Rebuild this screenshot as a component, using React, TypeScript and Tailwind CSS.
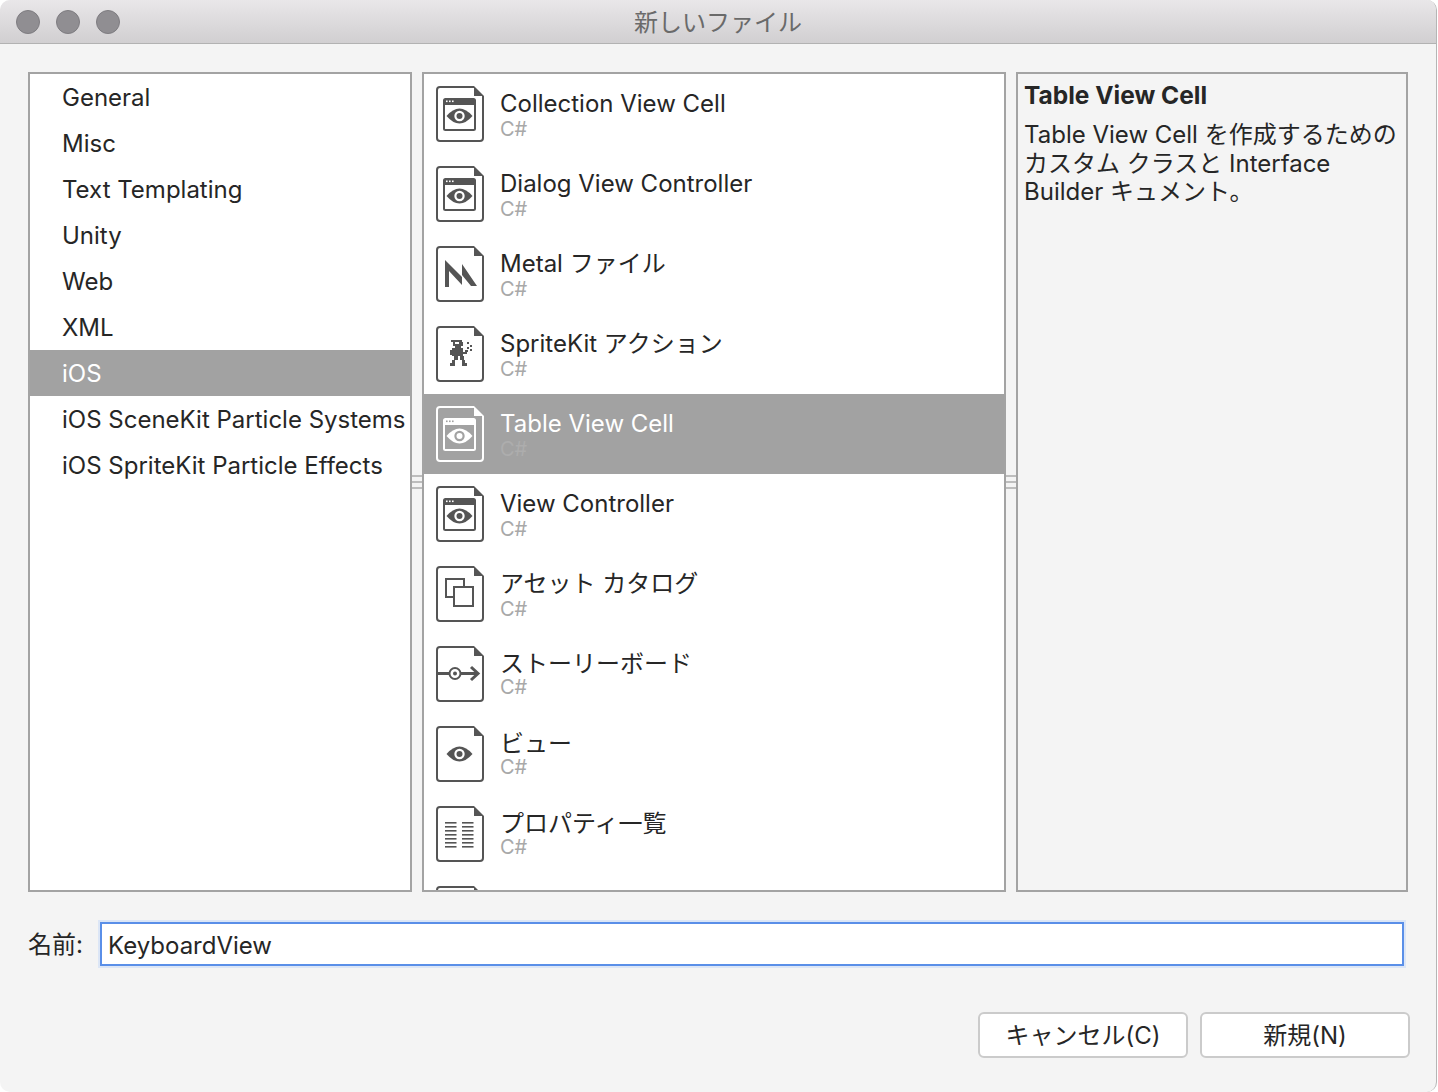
import React from "react";

const font = "font-['Inter','Noto_Sans_CJK_JP',sans-serif]";

const categories = [
  "General",
  "Misc",
  "Text Templating",
  "Unity",
  "Web",
  "XML",
  "iOS",
  "iOS SceneKit Particle Systems",
  "iOS SpriteKit Particle Effects",
];

type Glyph = "window" | "metal" | "sprite" | "assets" | "story" | "eye" | "list" | "none";

const templates: { title: string; glyph: Glyph; tight?: boolean }[] = [
  { title: "Collection View Cell", glyph: "window" },
  { title: "Dialog View Controller", glyph: "window" },
  { title: "Metal ファイル", glyph: "metal" },
  { title: "SpriteKit アクション", glyph: "sprite" },
  { title: "Table View Cell", glyph: "window" },
  { title: "View Controller", glyph: "window" },
  { title: "アセット カタログ", glyph: "assets" },
  { title: "ストーリーボード", glyph: "story", tight: true },
  { title: "ビュー", glyph: "eye", tight: true },
  { title: "プロパティ一覧", glyph: "list", tight: true },
  { title: "", glyph: "none" },
];

const Eye = ({ fg, bg, cy }: { fg: string; bg: string; cy: number }) => (
  <g>
    <path d={`M10.5 ${cy} Q23.5 ${cy - 15} 36.5 ${cy} Q23.5 ${cy + 15} 10.5 ${cy} Z`} fill={fg} />
    <circle cx="23.5" cy={cy} r="5.2" fill={bg} />
    <circle cx="23.5" cy={cy} r="3" fill={fg} />
  </g>
);

const spritePixels = [
  [15, 14, 11, 2], [17, 16, 2, 2], [23, 16, 4, 2], [17, 18, 10, 2], [19, 20, 6, 2],
  [16, 22, 11, 8], [14, 24, 2, 5], [27, 26, 4, 2], [29, 24, 3, 2],
  [18, 30, 4, 4], [24, 30, 4, 4], [16, 34, 3, 3], [26, 34, 3, 3],
  [14, 37, 5, 3], [26, 37, 5, 3], [31, 16, 2, 2], [34, 19, 2, 2],
  [31, 21, 2, 2], [34, 23, 2, 2],
];

const FileIcon = ({ glyph, selected }: { glyph: Glyph; selected: boolean }) => {
  const fg = selected ? "#ffffff" : "#555555";
  const bg = selected ? "#a2a2a2" : "#ffffff";
  return (
    <svg width="48" height="56" viewBox="0 0 48 56" className="shrink-0">
      <path d="M38 1 H4 a3 3 0 0 0 -3 3 V52 a3 3 0 0 0 3 3 H44 a3 3 0 0 0 3 -3 V10" fill="none" stroke={fg} strokeWidth="2" />
      <path d="M38 0 L48 10 H38 Z" fill={fg} />
      {glyph === "window" && (
        <g>
          <rect x="8" y="13" width="31" height="31" rx="1.5" fill="none" stroke={fg} strokeWidth="2" />
          <rect x="8" y="13" width="31" height="6" fill={fg} />
          <rect x="10" y="14.5" width="1.6" height="1.6" fill={bg} />
          <rect x="13" y="14.5" width="1.6" height="1.6" fill={bg} />
          <rect x="16" y="14.5" width="1.6" height="1.6" fill={bg} />
          <Eye fg={fg} bg={bg} cy={30} />
        </g>
      )}
      {glyph === "metal" && <path d="M9 14 L26 31 V18 L41 40 H35 L26 29 V39 L13 25 V41 H9 Z" fill={fg} />}
      {glyph === "sprite" && (
        <g fill={fg}>
          {spritePixels.map(([x, y, w, h], i) => (
            <rect key={i} x={x} y={y} width={w} height={h} />
          ))}
        </g>
      )}
      {glyph === "assets" && (
        <g fill="none" stroke={fg} strokeWidth="2">
          <rect x="10" y="13" width="18" height="18" />
          <rect x="18" y="21" width="19" height="19" fill={bg} />
        </g>
      )}
      {glyph === "story" && (
        <g fill="none" stroke={fg}>
          <path d="M1 27.5 H13 M25 27.5 H41" strokeWidth="3" />
          <path d="M35 21 L42 27.5 L35 34" strokeWidth="3" />
          <circle cx="19" cy="27.5" r="5.5" strokeWidth="2" />
          <circle cx="19" cy="27.5" r="2" fill={fg} stroke="none" />
        </g>
      )}
      {glyph === "eye" && <Eye fg={fg} bg={bg} cy={28} />}
      {glyph === "list" && (
        <g fill={fg}>
          {[16, 20, 24, 28, 32, 36, 40].map((y) => (
            <g key={y}>
              <rect x="9" y={y} width="11.5" height="1.6" />
              <rect x="26" y={y} width="11.5" height="1.6" />
            </g>
          ))}
        </g>
      )}
    </svg>
  );
};

const SplitGrip = () => (
  <div className="flex w-[10px] shrink-0 flex-col items-stretch justify-center gap-[4px]">
    <div className="h-[2px] bg-[#bdbdbd]" />
    <div className="h-[2px] bg-[#bdbdbd]" />
    <div className="h-[2px] bg-[#bdbdbd]" />
  </div>
);

export default function App() {
  return (
    <div className={`h-[1092px] w-[1438px] overflow-hidden bg-white text-[24px] text-[#262626] ${font}`}>
      <div className="flex h-full w-[1437px] flex-col overflow-hidden rounded-[10px] border-r border-[#b5b5b5] bg-[#f4f4f4]">
        {/* title bar */}
        <div className="relative flex h-[44px] shrink-0 items-center gap-[16px] border-b border-[#b2b2b2] bg-gradient-to-b from-[#e9e7e9] to-[#d1cfd1] pl-[16px]">
          <div className="h-[24px] w-[24px] rounded-full border border-[#7e7c80] bg-[#908e92]" />
          <div className="h-[24px] w-[24px] rounded-full border border-[#7e7c80] bg-[#908e92]" />
          <div className="h-[24px] w-[24px] rounded-full border border-[#7e7c80] bg-[#908e92]" />
          <div className="absolute inset-x-0 top-0 text-center text-[24px] leading-[46px] text-[#6a6a6a]">新しいファイル</div>
        </div>

        {/* panels */}
        <div className="ml-[28px] mt-[28px] flex h-[820px] w-[1380px] shrink-0">
          <div className="h-full w-[384px] shrink-0 overflow-hidden border-2 border-[#a3a3a3] bg-white">
            {categories.map((name) => (
              <div
                key={name}
                className={`h-[46px] whitespace-nowrap pl-[32px] leading-[48px] ${name === "iOS" ? "bg-[#a2a2a2] text-white" : ""}`}
              >
                {name}
              </div>
            ))}
          </div>
          <SplitGrip />
          <div className="h-full w-[584px] shrink-0 overflow-hidden border-2 border-[#a3a3a3] bg-white">
            {templates.map((t, i) => {
              const selected = t.title === "Table View Cell";
              return (
                <div key={i} className={`flex h-[80px] gap-[16px] pl-[12px] pt-[12px] ${selected ? "bg-[#a2a2a2]" : ""}`}>
                  <FileIcon glyph={t.glyph} selected={selected} />
                  {t.title && (
                    <div className="pt-[4px]">
                      <div className={`whitespace-nowrap leading-[28px] ${selected ? "text-white" : ""}`}>{t.title}</div>
                      <div className={`text-[20px] leading-[18px] ${t.tight ? "" : "mt-[2px]"} ${selected ? "text-[#adadad]" : "text-[#a8a8a8]"}`}>C#</div>
                    </div>
                  )}
                </div>
              );
            })}
          </div>
          <SplitGrip />
          <div className="h-full w-[392px] shrink-0 overflow-hidden border-2 border-[#a3a3a3] px-[6px] pt-[3px]">
            <div className="text-[24.5px] font-bold leading-[36px]">Table View Cell</div>
            <div className="mt-[8px] whitespace-nowrap leading-[28.5px]">Table View Cell を作成するための<br />カスタム クラスと Interface<br />Builder キュメント。</div>
          </div>
        </div>

        {/* name field */}
        <div className="ml-[28px] mt-[30px] flex h-[44px] w-[1376px] shrink-0 items-center gap-[16px]">
          <span className="w-[56px] shrink-0 pt-[2px]">名前:</span>
          <div className="h-full flex-1 border-2 border-[#5a8fe8] bg-white pl-[6px] leading-[44px] shadow-[0_0_0_2px_#dce6f6]">KeyboardView</div>
        </div>

        {/* buttons */}
        <div className="ml-[978px] mt-[46px] flex gap-[12px]">
          <div className="h-[46px] w-[210px] rounded-[6px] border-2 border-[#cbcbcb] bg-white text-center leading-[44px]">キャンセル(C)</div>
          <div className="h-[46px] w-[210px] rounded-[6px] border-2 border-[#cbcbcb] bg-white text-center leading-[44px]">新規(N)</div>
        </div>
      </div>
    </div>
  );
}
